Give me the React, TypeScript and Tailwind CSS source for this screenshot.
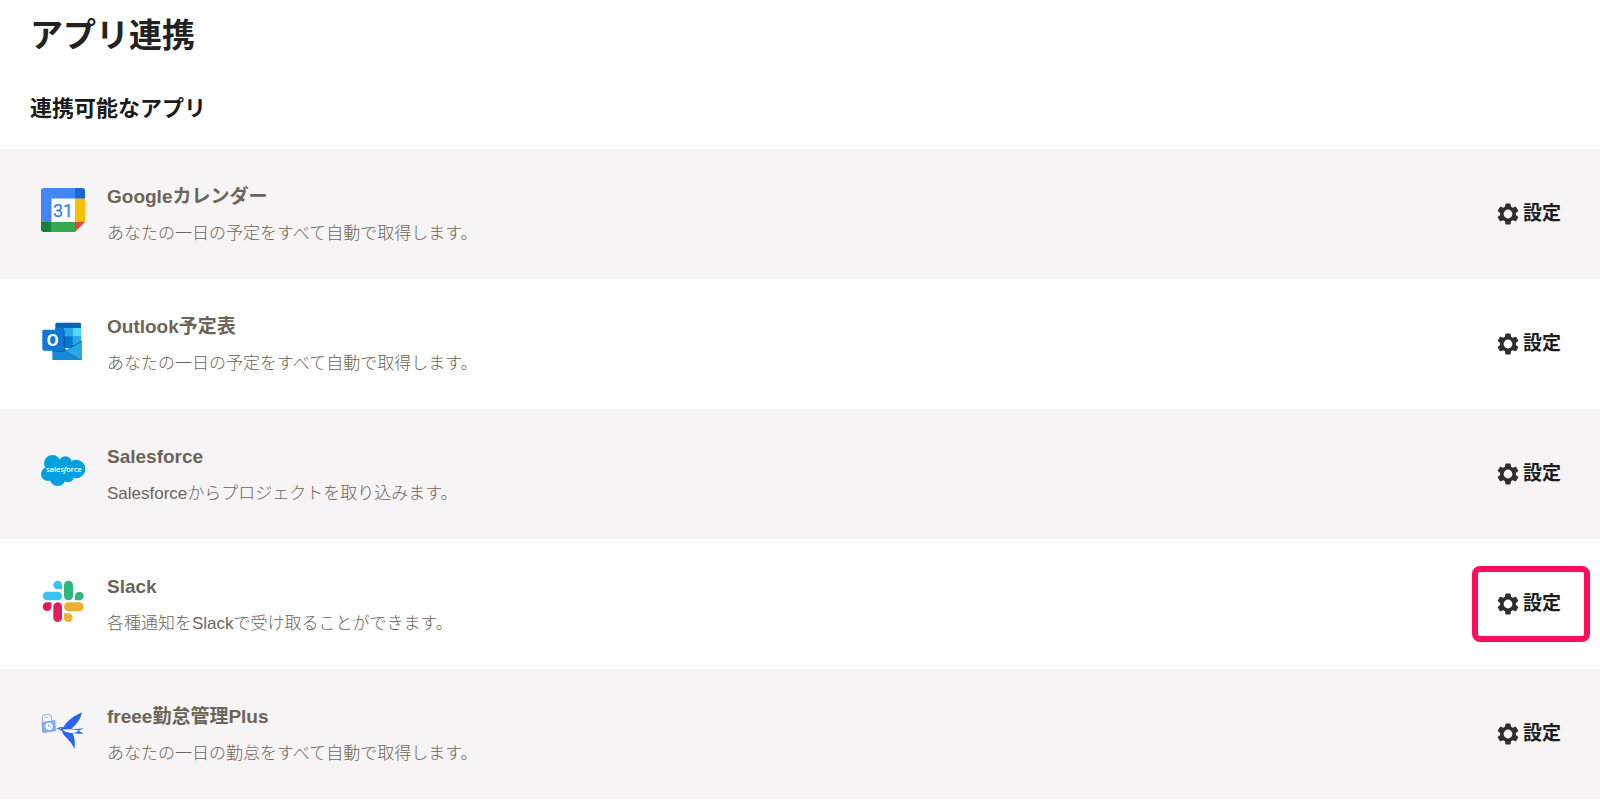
import type { ReactNode } from 'react'

interface AppItem {
  id: string
  name: string
  description: string
  icon: ReactNode
  highlighted?: boolean
}

function GoogleCalendarIcon() {
  return (
    <svg viewBox="33 39 132 132" className="w-11 h-11" aria-hidden="true">
      <path d="M41 39H135V71H65V141H33V47Q33 39 41 39Z" fill="#4285f4" />
      <path d="M135 39H157Q165 39 165 47V71H135Z" fill="#1967d2" />
      <path d="M135 71H165V141H135Z" fill="#fbbc04" />
      <path d="M65 141H135V171H65Z" fill="#34a853" />
      <path d="M33 141H65V171H41Q33 171 33 163Z" fill="#188038" />
      <path d="M135 141H165L135 171Z" fill="#ea4335" />
      <path d="M65 71H135V141H65Z" fill="#fff" />
      <text x="99" y="125" textAnchor="middle" fontSize="54" fontFamily="Roboto, sans-serif" fill="#4285f4" stroke="#4285f4">31</text>
    </svg>
  )
}

function OutlookIcon() {
  return (
    <svg viewBox="33 24 132 132" className="w-11 h-11" aria-hidden="true">
      <path d="M80 38H149Q153 38 153 42V110H76V42Q76 38 80 38Z" fill="#0364b8" />
      <path d="M76 54H102V80H76Z" fill="#0f78d4" />
      <path d="M102 54H128V80H102Z" fill="#28a8ea" />
      <path d="M128 54H153V80H128Z" fill="#50d9ff" />
      <path d="M76 80H102V112H76Z" fill="#0a5bae" />
      <path d="M102 80H128V114H102Z" fill="#0078d4" />
      <path d="M128 80H153V106H128Z" fill="#28a8ea" />
      <path d="M67 92L112 120L156 94V146Q156 150 152 150H71Q67 150 67 146Z" fill="#1688d8" />
      <path d="M156 94V146Q156 149 154 150L104 121L112 120Z" fill="#28a8ea" />
      <path d="M104 121L154 150" stroke="#0f7ac4" strokeWidth="2" />
      <path d="M112 119L156 93" stroke="#0a4a8a" strokeWidth="2" />
      <path d="M76 59H101Q105 60 105 65V121Q105 126 101 126H67V120H76Z" fill="#063b6d" opacity="0.4" />
      <rect x="37" y="59" width="64" height="63" rx="5" fill="#0f78d4" />
      <text x="68" y="108" textAnchor="middle" fontSize="46" fontWeight="700" fontFamily="'Open Sans', sans-serif" fill="#fff">O</text>
    </svg>
  )
}

function SalesforceIcon() {
  return (
    <svg viewBox="33 24 132 132" className="w-11 h-11" aria-hidden="true">
      <g fill="#00a1e0">
        <circle cx="67" cy="70" r="25" />
        <circle cx="106" cy="69" r="20" />
        <circle cx="138" cy="87" r="28" />
        <circle cx="54" cy="102" r="21" />
        <circle cx="83" cy="114" r="24" />
        <circle cx="114" cy="109" r="18" />
        <path d="M60 60H120L135 110H60Z" />
      </g>
      <text x="102" y="97" textAnchor="middle" fontSize="22" fontWeight="600" fontFamily="'Open Sans', sans-serif" fill="#fff">
        sales<tspan fontStyle="italic">f</tspan>orce
      </text>
    </svg>
  )
}

function SlackIcon() {
  return (
    <svg viewBox="33 24 132 132" className="w-11 h-11" aria-hidden="true">
      <g fill="#36c5f0">
        <rect x="38" y="65" width="58" height="26" rx="13" />
        <path d="M83 32A13 13 0 0 1 96 45V58H83A13 13 0 0 1 83 32Z" />
      </g>
      <g fill="#2eb67d">
        <rect x="102" y="32" width="27" height="59" rx="13" />
        <path d="M135 91V78A13 13 0 1 1 148 91Z" />
      </g>
      <g fill="#ecb22e">
        <rect x="102" y="97" width="59" height="27" rx="13" />
        <path d="M102 130H115A13 13 0 1 1 102 143Z" />
      </g>
      <g fill="#e01e5a">
        <rect x="70" y="97" width="26" height="59" rx="13" />
        <path d="M64 97V110A13 13 0 1 1 51 97Z" />
      </g>
    </svg>
  )
}

function FreeeIcon() {
  return (
    <svg viewBox="33 24 132 132" className="w-11 h-11" aria-hidden="true">
      {/* time card */}
      <path d="M37 50L40 46L56 43L63 47L66 64L39 68Z" fill="#fff" stroke="#83aaf7" strokeWidth="3" />
      <path d="M43 53L56 51" stroke="#83aaf7" strokeWidth="3" />
      <path d="M36 67L73 60Q76 60 76 63L78 90Q78 93 75 94L41 99Q38 99 37 96L34 70Q34 67 36 67Z" fill="#83aaf7" />
      <circle cx="57" cy="79" r="11" fill="#fff" />
      <path d="M56 72V80L63 79" fill="none" stroke="#83aaf7" strokeWidth="3" />
      {/* swallow */}
      <path d="M78 87L86 83Q92 79 100 82Q112 57 156 37Q150 66 124 86Q143 89 162 84L146 92L161 101Q145 102 127 98Q137 116 134 147Q124 127 111 115Q100 106 95 93Q90 87 78 87Z" fill="#2864f0" />
      <path d="M96 89Q122 86 148 92Q121 107 96 89Z" fill="#fff" />
      <circle cx="91" cy="85" r="2" fill="#fff" />
    </svg>
  )
}

function GearIcon() {
  return (
    <svg viewBox="2 2 20 20" className="w-[22px] h-[22px] shrink-0" fill="#2e2e2e" aria-hidden="true">
      <path d="M19.14 12.94c.04-.3.06-.61.06-.94 0-.32-.02-.64-.07-.94l2.03-1.58a.49.49 0 0 0 .12-.61l-1.92-3.32a.49.49 0 0 0-.59-.22l-2.39.96c-.5-.38-1.03-.7-1.62-.94l-.36-2.54a.48.48 0 0 0-.48-.41h-3.84a.47.47 0 0 0-.47.41l-.36 2.54c-.59.24-1.13.57-1.62.94l-2.39-.96a.48.48 0 0 0-.59.22L2.74 8.87a.47.47 0 0 0 .12.61l2.03 1.58c-.05.3-.09.63-.09.94s.02.64.07.94l-2.03 1.58a.49.49 0 0 0-.12.61l1.92 3.32c.12.22.37.29.59.22l2.39-.96c.5.38 1.03.7 1.62.94l.36 2.54c.05.24.24.41.48.41h3.84c.24 0 .44-.17.47-.41l.36-2.54c.59-.24 1.13-.56 1.62-.94l2.39.96c.22.08.47 0 .59-.22l1.92-3.32a.47.47 0 0 0-.12-.61l-2.01-1.58zM12 16a4 4 0 1 1 0-8 4 4 0 0 1 0 8z" />
    </svg>
  )
}

const apps: AppItem[] = [
  { id: 'google', name: 'Googleカレンダー', description: 'あなたの一日の予定をすべて自動で取得します。', icon: <GoogleCalendarIcon /> },
  { id: 'outlook', name: 'Outlook予定表', description: 'あなたの一日の予定をすべて自動で取得します。', icon: <OutlookIcon /> },
  { id: 'salesforce', name: 'Salesforce', description: 'Salesforceからプロジェクトを取り込みます。', icon: <SalesforceIcon /> },
  { id: 'slack', name: 'Slack', description: '各種通知をSlackで受け取ることができます。', icon: <SlackIcon />, highlighted: true },
  { id: 'freee', name: 'freee勤怠管理Plus', description: 'あなたの一日の勤怠をすべて自動で取得します。', icon: <FreeeIcon /> },
]

function AppRow({ app }: { app: AppItem }) {
  return (
    <li className="flex items-center justify-between pl-[41px] pr-[39px] py-8 odd:bg-[#f6f4f5]">
      <div className="flex items-start gap-[22px]">
        <div className="pt-[7px]">{app.icon}</div>
        <div className="flex flex-col gap-2">
          <h3 className="text-[19px] leading-8 font-bold text-[#6b6558]">{app.name}</h3>
          <p className="text-[17px] leading-[26px] font-light text-[#6b6558]">{app.description}</p>
        </div>
      </div>

      <button type="button" aria-label={`${app.name} 設定`} className="relative flex items-center gap-1 text-[19px] leading-8 font-bold text-[#1c1c1c] cursor-pointer">
        <GearIcon />
        <span>設定</span>
        {app.highlighted && (
          <span className="absolute -left-[25px] -right-[29px] -inset-y-[22px] rounded-lg border-6 border-[#ff0f5b] pointer-events-none" />
        )}
      </button>
    </li>
  )
}

export default function App() {
  return (
    <main className="min-h-screen bg-white font-['Liberation_Sans','Noto_Sans_CJK_JP',sans-serif]">
      <header className="px-[30px] pt-3 pb-6">
        <h1 className="text-[33px] leading-12 font-bold text-[#222]">アプリ連携</h1>
        <h2 className="mt-[33px] text-[22px] leading-8 font-bold text-[#1a1a1a]">連携可能なアプリ</h2>
      </header>

      <ul>
        {apps.map(app => <AppRow key={app.id} app={app} />)}
      </ul>
    </main>
  )
}
